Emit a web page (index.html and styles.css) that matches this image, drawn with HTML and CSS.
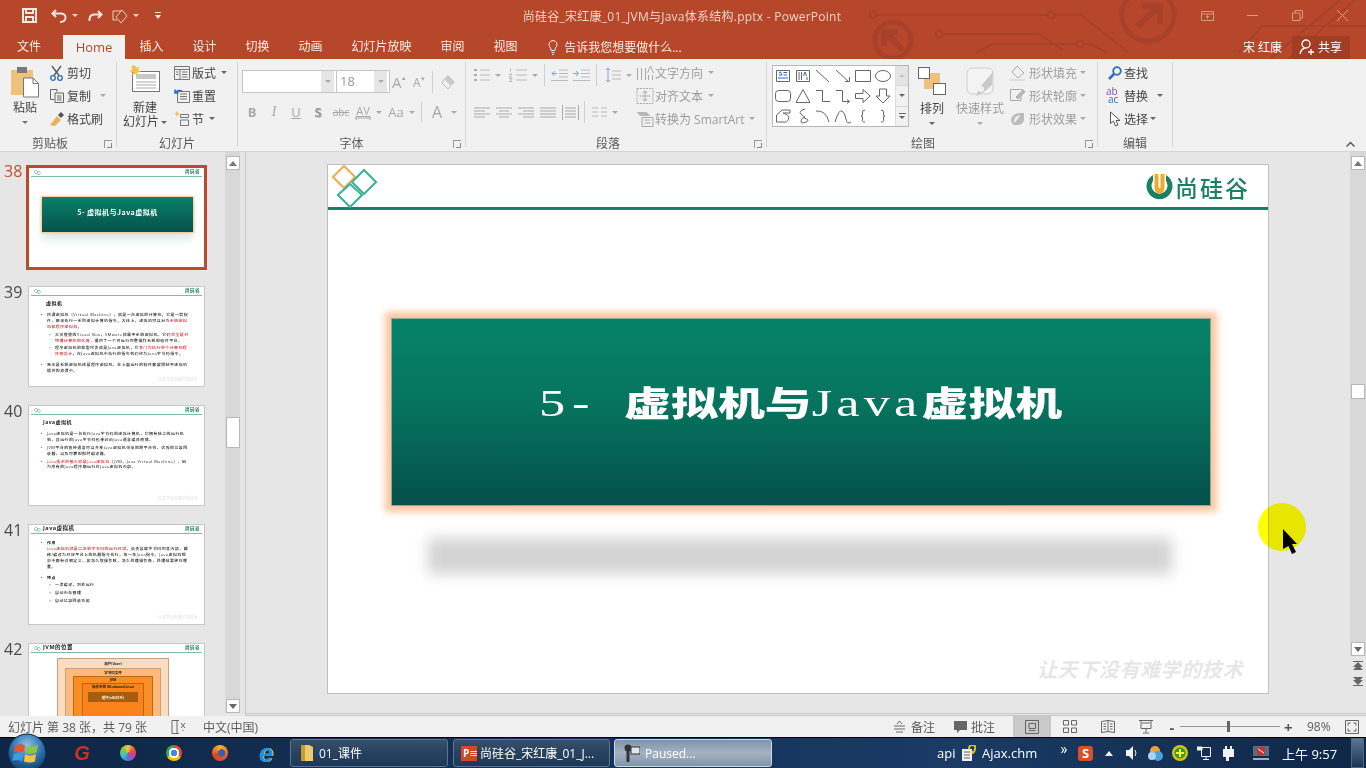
FILE: index.html
```html
<!DOCTYPE html>
<html lang="zh-CN">
<head>
<meta charset="utf-8">
<title>PowerPoint</title>
<link rel="stylesheet" href="styles.css">
</head>
<body>
<div class="app">
  <header class="chrome">
    <svg class="circuit" width="1366" height="59" viewBox="0 0 1366 59" fill="none" stroke="#a8412a" stroke-width="2">
      <circle cx="873" cy="15" r="3.5"/><path d="M877 15H1047"/><circle cx="1051" cy="15" r="3.5"/><path d="M1055 15H1081L1128 52"/>
      <circle cx="939" cy="34" r="3.5"/><path d="M943 34H1039L1063 50"/>
      <path d="M976 52L993 44H1076"/><circle cx="1080" cy="44" r="3.5"/><path d="M1084 44H1090L1106 52"/>
      <circle cx="1148" cy="15" r="26" stroke-width="5"/><path d="M1137 27L1158 7M1142 6H1160V24" stroke-width="6"/>
      <circle cx="893" cy="40" r="18" stroke-width="5"/><path d="M903 50L885 32M884 46V32H898" stroke-width="6"/>
      <path d="M1239 52L1262 26H1366M1270 59L1340 0M1288 59L1355 0"/>
    </svg>
    <div class="titlebar">
      <div class="qat">
        <svg class="q-save" width="15" height="15" viewBox="0 0 15 15" fill="none" stroke="#f5e6e0" stroke-width="2"><path d="M1 1H14V14H1ZM4 1V5H11V1M4 14V9H11V14"/></svg>
        <svg class="q-undo" width="16" height="14" viewBox="0 0 16 14" fill="none" stroke="#f5e6e0" stroke-width="2"><path d="M5 1L1.500 4.500L5 8M2 4.500H10Q15 5 14.500 9T9 13"/></svg>
        <i class="caret light q-c1"></i>
        <svg class="q-redo" width="15" height="12" viewBox="0 0 15 12" fill="none" stroke="#f5e6e0" stroke-width="2"><path d="M10 1L13.500 4.500L10 8M13 4.500H6Q1 5 1.500 11"/></svg>
        <svg class="q-touch" width="16" height="16" viewBox="0 0 16 16" fill="none" stroke="#ecd3ca"><path d="M1 3H9M1 3V12H5M10 2L15 8L9 15L4 9Z"/></svg>
        <i class="caret light q-c2"></i>
        <svg class="q-more" width="6" height="7" viewBox="0 0 6 7" fill="#f5e6e0"><path d="M0 0H6V1H0ZM0 3H6L3 7Z"/></svg>
      </div>
      <div class="doc-title">尚硅谷_宋红康_01_JVM与Java体系结构.pptx - PowerPoint</div>
      <div class="winbtns">
        <svg class="w1" width="13" height="10" viewBox="0 0 13 10" fill="none" stroke="#d99a85"><path d="M.5.5H12.500V9.500H.5ZM.5 3H12.500M6.500 8V4.500M5 6L6.500 4.500L8 6"/></svg>
        <svg class="w2" width="11" height="1" viewBox="0 0 11 1"><path d="M0 0H11V1H0Z" fill="#d99a85"/></svg>
        <svg class="w3" width="11" height="11" viewBox="0 0 11 11" fill="none" stroke="#d99a85"><path d="M.5 3H8V10.500H.5ZM3 3V.5H10.500V8H8"/></svg>
        <svg class="w4" width="11" height="11" viewBox="0 0 11 11" fill="none" stroke="#d99a85"><path d="M0 0L11 11M11 0L0 11"/></svg>
      </div>
    </div>
    <nav class="tabs">
      <span class="tab first">文件</span>
      <span class="tab home">Home</span>
      <span class="tab">插入</span>
      <span class="tab">设计</span>
      <span class="tab">切换</span>
      <span class="tab">动画</span>
      <span class="tab">幻灯片放映</span>
      <span class="tab">审阅</span>
      <span class="tab">视图</span>
      <span class="tell">
        <svg width="10" height="15" viewBox="0 0 10 15" fill="none" stroke="#fbeee9"><path d="M3 10.500Q3 8 1.500 6.500A4 4 0 1 1 8.500 6.500Q7 8 7 10.500ZM3.500 12.500H6.500M4 14.500H6"/></svg>
        告诉我您想要做什么...
      </span>
      <span class="user">宋 红康</span>
      <span class="share">
        <svg width="16" height="16" viewBox="0 0 16 16" fill="none" stroke="#fff" stroke-width="1.300"><circle cx="7" cy="5" r="4"/><path d="M1 15Q2 10 6 9M12 10V16M9 13H15"/></svg>
        共享
      </span>
    </nav>
  </header>

  <section class="ribbon">
    <div class="group g-clip">
      <div class="body">
        <div class="big paste">
          <svg width="30" height="32" viewBox="0 0 30 32"><rect x="1" y="4" width="22" height="25" fill="#eec27a"/><rect x="7" y="1" width="10" height="6" fill="#7b7b7b"/><path d="M13.500 12H23L28.500 17.500V31H13.500Z" fill="#fff" stroke="#777"/><path d="M23 12V17.500H28.500" fill="none" stroke="#777"/></svg>
          <span class="big-label">粘贴</span>
          <i class="caret"></i>
        </div>
        <div class="col col-clip">
          <div class="item"><svg class="ic" width="16" height="16" viewBox="0 0 16 16" fill="none" stroke="#555" stroke-width="1.300"><path d="M3 1L10 10.500M12 1L5 10.500"/><circle cx="4" cy="13" r="2.300" stroke="#2a6ebb"/><circle cx="11" cy="13" r="2.300" stroke="#2a6ebb"/></svg>剪切</div>
          <div class="item"><svg class="ic" width="16" height="16" viewBox="0 0 16 16" fill="none" stroke="#666"><path d="M1.500 1.500H8V4M1.500 1.500V11.500H5M6 5H14.500V14.500H6ZM8 8H12.500M8 10H12.500M8 12H12.500"/></svg>复制<i class="caret c-copy"></i></div>
          <div class="item"><svg class="ic" width="16" height="16" viewBox="0 0 16 16"><path d="M1 14L8 5L12 9L6 15Z" fill="#e8b45a"/><path d="M9 4L12 1L15 4L12 7Z" fill="#555"/></svg>格式刷</div>
        </div>
      </div>
      <div class="glabel lb-clip">剪贴板<i class="launch"></i></div>
    </div>

    <div class="group g-slides">
      <div class="body">
        <div class="big newslide">
          <svg width="32" height="28" viewBox="0 0 32 28"><rect x="3.500" y="6.500" width="27" height="20" fill="#fff" stroke="#777"/><rect x="7" y="9" width="20" height="5" fill="#c8c8c8"/><path d="M7 17H27M7 20H27M7 23H27" stroke="#aaa"/><path d="M6 0L7.500 3L11 1.500L9 5L12 7L8.500 7.500L8 11L6 8.500L3 10.500L4 7L0 6L3.500 4.500L2 1.500Z" fill="#f0c04a"/></svg>
          <span class="big-label nl1">新建</span>
          <span class="big-label nl2">幻灯片<i class="caret"></i></span>
        </div>
        <div class="col col-slides">
          <div class="item"><svg class="ic" width="16" height="14" viewBox="0 0 16 14" fill="none" stroke="#777"><path d="M.5.5H15.500V13.500H.5ZM.5 3.500H15.500M6 3.500V13.500M8 6H13.500M8 8.500H13.500M8 11H13.500M2 6H4.500M2 8.500H4.500"/></svg>版式<i class="caret"></i></div>
          <div class="item"><svg class="ic" width="16" height="15" viewBox="0 0 16 15" fill="none" stroke="#777"><path d="M3.500 3.500H15.500V14.500H3.500ZM6 6H13M6 8.500H13M6 11H13"/><path d="M8 3A5 4 0 0 0 1 5M1 1.500V5H4.500" stroke="#2a6ebb" stroke-width="1.500"/></svg>重置</div>
          <div class="item"><svg class="ic" width="16" height="15" viewBox="0 0 16 15" fill="none" stroke="#777"><path d="M6.500 3.500H14.500V6.500H6.500ZM6.500 9H14.500V14.500H6.500Z"/><path d="M3 0L4 2L6 2.500L4 3.500L3 6L2 3.500L0 2.500L2 2Z" fill="#f0c04a" stroke="none"/></svg>节<i class="caret"></i></div>
        </div>
      </div>
      <div class="glabel">幻灯片</div>
    </div>

    <div class="group g-font dim">
      <div class="body stack">
        <div class="font-row1">
          <div class="combo c-name"><span class="combo-btn"><i class="caret"></i></span></div>
          <div class="combo c-size"><span class="combo-text">18</span><span class="combo-btn"><i class="caret"></i></span></div>
          <span class="fbtn f-grow">A<sup>▴</sup></span>
          <span class="fbtn f-shrink">A<sup>▾</sup></span>
          <i class="vsep vs-a"></i>
          <svg class="f-clear" width="16" height="16" viewBox="0 0 16 16"><path d="M7 1L14 8L10 12L3 5Z" fill="#c9c9c9"/><path d="M3 5L1 9L7 15L10 12" fill="none" stroke="#bbb"/></svg>
        </div>
        <div class="font-row2">
          <b class="cell">B</b><em class="cell serif">I</em><u class="cell">U</u><b class="cell shadow">S</b>
          <span class="cell abc">abc</span>
          <span class="cell av"><span class="av-t">AV</span><svg width="16" height="4" viewBox="0 0 16 4" fill="none" stroke="#aaa"><path d="M0 2H16M2 0L0 2L2 4M14 0L16 2L14 4"/></svg></span>
          <i class="caret c-av"></i>
          <span class="cell aa">Aa</span><i class="caret c-aa"></i>
          <i class="vsep vs-b"></i>
          <span class="cell bigA">A</span><i class="caret"></i>
        </div>
      </div>
      <div class="glabel">字体<i class="launch"></i></div>
    </div>

    <div class="group g-para dim">
      <div class="body">
        <div class="stack para-left">
          <div class="para-row1">
            <svg class="p-list" width="16" height="14" viewBox="0 0 16 14" stroke="#bbb"><path d="M6 2H16M6 7H16M6 12H16"/><path d="M0 1H3V3H0ZM0 6H3V8H0ZM0 11H3V13H0Z" fill="#aaa" stroke="none"/></svg><i class="caret"></i>
            <svg class="p-num" width="18" height="14" viewBox="0 0 18 14" fill="none" stroke="#bbb"><path d="M7 2H18M7 7H18M7 12H18M1.500 .5V3.500M0 6H3L0 9H3M0 10.500H3L1.500 12L3 13.500H0"/></svg><i class="caret"></i>
            <i class="vsep vs-c"></i>
            <svg class="p-ind" width="17" height="12" viewBox="0 0 17 12" fill="none" stroke="#bbb"><path d="M8 1H17M8 4.500H17M8 8H17M0 11.500H17"/><path d="M6 4.500H1M3.500 2L1 4.500L3.500 7" stroke="#7aa5d8"/></svg>
            <svg class="p-ind2" width="17" height="12" viewBox="0 0 17 12" fill="none" stroke="#bbb"><path d="M8 1H17M8 4.500H17M8 8H17M0 11.500H17"/><path d="M0 4.500H5M3 2L5.500 4.500L3 7" stroke="#7aa5d8"/></svg>
            <i class="vsep vs-d"></i>
            <svg class="p-ls" width="16" height="16" viewBox="0 0 16 16" fill="none" stroke="#bbb"><path d="M7 4H16M7 8H16M7 12H16"/><path d="M3 1V15M1 3L3 1L5 3M1 13L3 15L5 13" stroke="#7aa5d8"/></svg><i class="caret"></i>
          </div>
          <div class="para-row2">
            <svg class="p-a" width="16" height="11" viewBox="0 0 16 11" stroke="#aaa"><path d="M0 1H16M0 4H11M0 7H16M0 10H11"/></svg>
            <svg class="p-a" width="16" height="11" viewBox="0 0 16 11" stroke="#aaa"><path d="M0 1H16M3 4H13M0 7H16M3 10H13"/></svg>
            <svg class="p-a" width="16" height="11" viewBox="0 0 16 11" stroke="#aaa"><path d="M0 1H16M5 4H16M0 7H16M5 10H16"/></svg>
            <svg class="p-a" width="16" height="11" viewBox="0 0 16 11" stroke="#aaa"><path d="M0 1H16M0 4H16M0 7H16M0 10H16"/></svg>
            <svg class="p-a" width="17" height="15" viewBox="0 0 17 15" fill="none" stroke="#aaa"><path d="M.5 0V15M16.500 0V15M3 3H14M3 6H14M3 9H14M3 12H14"/></svg>
            <i class="vsep vs-e"></i>
            <svg class="p-col" width="15" height="10" viewBox="0 0 15 10" stroke="#bbb"><path d="M0 1H6M9 1H15M0 5H6M9 5H15M0 9H6M9 9H15"/></svg><i class="caret"></i>
          </div>
        </div>
        <div class="col col-para">
          <div class="item"><svg class="ic" width="17" height="16" viewBox="0 0 17 16" fill="none" stroke="#aaa"><path d="M1 3V15M5 3V15M9 3V15M12 10V15M16 10V15M11 8L14 1L17 8"/></svg>文字方向<i class="caret"></i></div>
          <div class="item"><svg class="ic" width="17" height="16" viewBox="0 0 17 16" fill="none" stroke="#aaa" stroke-dasharray="2 1"><path d="M.5.5H16.500V15.500H.5Z"/><path d="M8.500 3V13M6 5L8.500 3L11 5M6 11L8.500 13L11 11M3 8H14" stroke-dasharray="none"/></svg>对齐文本<i class="caret"></i></div>
          <div class="item"><svg class="ic" width="17" height="16" viewBox="0 0 17 16" fill="none" stroke="#aaa"><path d="M0 1H10L14 5H4Z" fill="#b8b8b8" stroke="none"/><path d="M5.500 6.500H16.500V15.500H5.500ZM8 9H14M8 12H14"/></svg>转换为 SmartArt<i class="caret"></i></div>
        </div>
      </div>
      <div class="glabel lb-para">段落<i class="launch"></i></div>
    </div>

    <div class="group g-draw">
      <div class="body">
        <div class="gallery">
          <div class="shapes">
            <svg width="20" height="20" viewBox="0 0 20 20" fill="none" stroke="#666"><path d="M3.500 4.500H16.500V15.500H3.500Z"/><path d="M6 9H9M6 7L7.500 6L9 9M10.500 6.500H14M10.500 9H14M5 12H15" stroke="#2a6ebb"/></svg>
            <svg width="20" height="20" viewBox="0 0 20 20" fill="none" stroke="#666"><path d="M3.500 4.500H16.500V15.500H3.500ZM6 6V14M8.500 6V14M14 11V14"/><path d="M10.500 10L12 6L13.500 10" stroke="#2a6ebb"/></svg>
            <svg width="20" height="20" viewBox="0 0 20 20" stroke="#666"><path d="M3 4L16 16"/></svg>
            <svg width="20" height="20" viewBox="0 0 20 20" fill="none" stroke="#666"><path d="M3 4L16 16M12 15.500H16.500V11"/></svg>
            <svg width="20" height="20" viewBox="0 0 20 20" fill="none" stroke="#666"><path d="M2.500 4.500H17.500V15.500H2.500Z"/></svg>
            <svg width="20" height="20" viewBox="0 0 20 20" fill="none" stroke="#666"><ellipse cx="10" cy="10" rx="7.500" ry="5.500"/></svg>
            <svg width="20" height="20" viewBox="0 0 20 20" fill="none" stroke="#666"><rect x="2.500" y="4.500" width="15" height="11" rx="3"/></svg>
            <svg width="20" height="20" viewBox="0 0 20 20" fill="none" stroke="#666"><path d="M10 3.500L17 16.500H3Z"/></svg>
            <svg width="20" height="20" viewBox="0 0 20 20" fill="none" stroke="#666"><path d="M3 4.500H9.500V15.500H17"/></svg>
            <svg width="20" height="20" viewBox="0 0 20 20" fill="none" stroke="#666"><path d="M3 4.500H9.500V15.500H16M14 13.500L16.500 15.500L14 17.500"/></svg>
            <svg width="20" height="20" viewBox="0 0 20 20" fill="none" stroke="#666"><path d="M2.500 7.500H10V3.500L17 10L10 16.500V12.500H2.500Z"/></svg>
            <svg width="20" height="20" viewBox="0 0 20 20" fill="none" stroke="#666"><path d="M6.500 3H13.500V10H17L10 17L3 10H6.500Z"/></svg>
            <svg width="20" height="20" viewBox="0 0 20 20" fill="none" stroke="#666"><path d="M9 4H17V7H10Q17 9 15.500 13T10 16H3.500V9Z"/></svg>
            <svg width="20" height="20" viewBox="0 0 20 20" fill="none" stroke="#666"><path d="M12 3Q5 5 8 8T12 11Q8 12 8 15T13 16T11 12"/></svg>
            <svg width="20" height="20" viewBox="0 0 20 20" fill="none" stroke="#666"><path d="M3 5Q13 4 16 16"/></svg>
            <svg width="20" height="20" viewBox="0 0 20 20" fill="none" stroke="#666"><path d="M2 16Q6 3 9 5T13 13T18 16"/></svg>
            <svg width="20" height="20" viewBox="0 0 20 20" fill="none" stroke="#666"><path d="M12 4Q9 4 9.500 7T8 10Q10.500 10 9.500 13T12 16"/></svg>
            <svg width="20" height="20" viewBox="0 0 20 20" fill="none" stroke="#666"><path d="M8 4Q11 4 10.500 7T12 10Q9.500 10 10.500 13T8 16"/></svg>
          </div>
          <div class="gal-scroll">
            <span class="gs dis"><i class="up"></i></span>
            <span class="gs"><i class="caret dark"></i></span>
            <span class="gs"><i class="more"></i><i class="caret dark"></i></span>
          </div>
        </div>
        <div class="big arrange">
          <svg width="28" height="28" viewBox="0 0 28 28"><rect x="6" y="6" width="16" height="16" fill="#eec27a"/><rect x=".5" y=".5" width="11" height="11" fill="#fff" stroke="#666"/><rect x="15.500" y="16.500" width="12" height="11" fill="#fff" stroke="#666"/></svg>
          <span class="big-label">排列</span>
          <i class="caret dark"></i>
        </div>
        <div class="big quick dim">
          <svg width="28" height="30" viewBox="0 0 28 30"><rect x="1" y="1" width="26" height="26" rx="5" fill="#f3f3f3" stroke="#d0d0d0"/><path d="M10 29L14 20L27 5L26 18L18 25Z" fill="#c9c9c9"/><circle cx="15" cy="22" r="3" fill="#f3f3f3"/></svg>
          <span class="big-label">快速样式</span>
          <i class="caret"></i>
        </div>
        <div class="col col-draw dim">
          <div class="item"><svg class="ic" width="16" height="16" viewBox="0 0 16 16" fill="none" stroke="#aaa"><path d="M7 1L14 8L8 13L2 7Z"/><path d="M0 14H15V16H0Z" fill="#ddd" stroke="none"/></svg>形状填充<i class="caret"></i></div>
          <div class="item"><svg class="ic" width="16" height="16" viewBox="0 0 16 16" fill="none" stroke="#aaa"><path d="M13 1.500H.5V12.500H11V8"/><path d="M6 9L13 2L15 4L8 11Z" fill="#bbb"/></svg>形状轮廓<i class="caret"></i></div>
          <div class="item"><svg class="ic" width="16" height="16" viewBox="0 0 16 16"><path d="M1 8Q3 2 10 2H14V9Q13 14 7 14H4Q1 12 1 8Z" fill="#bbb"/><path d="M4 9Q5 5 10 4Q9 8 4 12Z" fill="#eee"/></svg>形状效果<i class="caret"></i></div>
        </div>
      </div>
      <div class="glabel lb-draw">绘图<i class="launch"></i></div>
    </div>

    <div class="group g-edit">
      <div class="body">
        <div class="col col-edit">
          <div class="item"><svg class="ic" width="14" height="14" viewBox="0 0 14 14" fill="none" stroke="#2a6ebb" stroke-width="1.800"><circle cx="9" cy="5" r="3.800"/><path d="M6 8L1 13" stroke-width="2.500"/></svg>查找</div>
          <div class="item"><span class="ic abac"><span class="ab">ab</span><span class="ac">ac</span></span>替换<i class="caret dark c-rep"></i></div>
          <div class="item"><svg class="ic" width="12" height="16" viewBox="0 0 12 16" fill="#fff" stroke="#555"><path d="M1.500 1V12.500L4.500 10L6.500 15L9 14L7 9.500H11Z"/></svg>选择<i class="caret dark"></i></div>
        </div>
      </div>
      <div class="glabel">编辑</div>
    </div>
    <svg class="collapse" width="9" height="6" viewBox="0 0 9 6" fill="none" stroke="#555" stroke-width="1.500"><path d="M.5 5.500L4.500 1.500L8.500 5.500"/></svg>
  </section>

  <main class="main">
    <aside class="pane">
      <div class="thumbs">
        <div class="trow selected"><span class="num">38</span>
          <div class="thumb">
            <div class="t-head"><svg width="8" height="7" viewBox="0 0 8 7" fill="none" stroke="#4fb59d" stroke-width=".6"><path d="M1 3L3 1L5 3L3 5ZM4 4L6 2L7.500 4L6 6Z"/></svg><span class="t-logo">尚硅谷</span></div>
            <div class="t-box">5- 虚拟机与Java虚拟机</div>
          </div>
        </div>
        <div class="trow"><span class="num">39</span>
          <div class="thumb">
            <div class="t-head"><svg width="8" height="7" viewBox="0 0 8 7" fill="none" stroke="#4fb59d" stroke-width=".6"><path d="M1 3L3 1L5 3L3 5ZM4 4L6 2L7.500 4L6 6Z"/></svg><span class="t-logo">尚硅谷</span></div>
            <div class="t-title t39">虚拟机</div>
            <ul class="t-list">
              <li>所谓虚拟机（Virtual Machine），就是一台虚拟的计算机。它是一款软件，用来执行一系列虚拟计算机指令。大体上，虚拟机可以分为<span class="red">系统虚拟机和程序虚拟机</span>。</li>
              <li class="sub">大名鼎鼎的Visual Box，VMware就属于系统虚拟机，它们<span class="red">完全是对物理计算机的仿真</span>，提供了一个可运行完整操作系统的软件平台。</li>
              <li class="sub">程序虚拟机的典型代表就是Java虚拟机，它<span class="red">专门为执行单个计算机程序而设计</span>，在Java虚拟机中执行的指令我们称为Java字节码指令。</li>
              <li class="gap">无论是系统虚拟机还是程序虚拟机，在上面运行的软件都被限制于虚拟机提供的资源中。</li>
            </ul>
            <div class="t-foot">让天下没有难学的技术</div>
          </div>
        </div>
        <div class="trow"><span class="num">40</span>
          <div class="thumb">
            <div class="t-head"><svg width="8" height="7" viewBox="0 0 8 7" fill="none" stroke="#4fb59d" stroke-width=".6"><path d="M1 3L3 1L5 3L3 5ZM4 4L6 2L7.500 4L6 6Z"/></svg><span class="t-logo">尚硅谷</span></div>
            <div class="t-title t40">Java虚拟机</div>
            <ul class="t-list">
              <li>Java虚拟机是一台执行Java字节码的虚拟计算机，它拥有独立的运行机制，其运行的Java字节码也未必由Java语言编译而成。</li>
              <li>JVM平台的各种语言可以共享Java虚拟机带来的跨平台性、优秀的垃圾回收器，以及可靠的即时编译器。</li>
              <li><span class="red">Java技术的核心就是Java虚拟机</span>（JVM，Java Virtual Machine），因为所有的Java程序都运行在Java虚拟机内部。</li>
            </ul>
            <div class="t-foot">让天下没有难学的技术</div>
          </div>
        </div>
        <div class="trow"><span class="num">41</span>
          <div class="thumb">
            <div class="t-head"><svg width="8" height="7" viewBox="0 0 8 7" fill="none" stroke="#4fb59d" stroke-width=".6"><path d="M1 3L3 1L5 3L3 5ZM4 4L6 2L7.500 4L6 6Z"/></svg><span class="t-inline">Java虚拟机</span><span class="t-logo">尚硅谷</span></div>
            <ul class="t-list t41">
              <li><b>作用</b><br><span class="red">Java虚拟机就是二进制字节码的运行环境</span>，负责装载字节码到其内部，解释/编译为对应平台上的机器指令执行。每一条Java指令，Java虚拟机规范中都有详细定义，如怎么取操作数，怎么处理操作数，处理结果放在哪里。</li>
              <li class="gap"><b>特点</b></li>
              <li class="sub">一次编译，到处运行</li>
              <li class="sub">自动内存管理</li>
              <li class="sub">自动垃圾回收功能</li>
            </ul>
            <div class="t-foot">让天下没有难学的技术</div>
          </div>
        </div>
        <div class="trow"><span class="num">42</span>
          <div class="thumb">
            <div class="t-head"><svg width="8" height="7" viewBox="0 0 8 7" fill="none" stroke="#4fb59d" stroke-width=".6"><path d="M1 3L3 1L5 3L3 5ZM4 4L6 2L7.500 4L6 6Z"/></svg><span class="t-inline">JVM的位置</span><span class="t-logo">尚硅谷</span></div>
            <div class="layers l1">用户(User)
              <div class="layers l2">字节码文件
                <div class="layers l3">JVM
                  <div class="layers l4">操作系统 Windows/Linux
                    <div class="layers l5">硬件(x86体系)</div>
                  </div>
                </div>
              </div>
            </div>
          </div>
        </div>
      </div>
      <div class="vscroll thin">
        <span class="sbtn"><i class="up"></i></span>
        <span class="sthumb sth-left"></span>
        <span class="sbtn bottom"><i class="caret dark"></i></span>
      </div>
    </aside>

    <section class="edit">
      <div class="edit-top">
        <div class="slide-wrap">
          <article class="slide">
            <div class="s-head">
              <svg width="50" height="44" viewBox="0 0 50 44" fill="none" stroke-width="2.200"><path d="M16 1L27 12L16 23L5 12Z" stroke="#eab057"/><path d="M36 5L48 17L36 29L24 17Z" stroke="#3fb39a"/><path d="M22 19L34 30L22 42L10 30Z" stroke="#3fb39a"/></svg>
              <div class="s-logo">
                <svg width="27" height="28" viewBox="0 0 27 28"><path d="M7 2A13 13 0 1 0 20 2V8A8 8 0 1 1 7 8Z" fill="#1b7f62"/><path d="M8.500 1H18.500V15A5 5.500 0 0 1 8.500 15Z" fill="#eeaa2c"/><path d="M12.500 1H14.500V15H12.500Z" fill="#fff"/></svg>
                <span>尚硅谷</span>
              </div>
            </div>
            <div class="s-box"><h1 class="s-title"><span class="lat sp">5-</span>虚拟机与<span class="lat">Java</span>虚拟机</h1></div>
            <div class="s-sub"></div>
            <div class="s-water">让天下没有难学的技术</div>
          </article>
        </div>
        <div class="vscroll wide">
          <span class="sbtn"><i class="up"></i></span>
          <span class="sthumb sth-right"></span>
          <span class="sbtn bottom2"><i class="caret dark"></i></span>
          <div class="pager">
            <svg width="10" height="10" viewBox="0 0 10 10" fill="#666"><path d="M0 1H10V2H0ZM5 2L10 7H0ZM5 5L10 10H0Z"/></svg>
            <svg width="10" height="10" viewBox="0 0 10 10" fill="#666"><path d="M0 0L10 0L5 5ZM0 3L10 3L5 8ZM0 8H10V9H0Z"/></svg>
          </div>
        </div>
      </div>
      <div class="hlines"></div>
    </section>
  </main>

  <footer class="status">
    <span class="st-count">幻灯片 第 38 张，共 79 张</span>
    <svg class="st-spell" width="15" height="14" viewBox="0 0 15 14" fill="none" stroke="#666"><path d="M6 .5H1V13.500H6M8 .5H6V13.500H8M10 3L14 8M14 3L10 8M12 10V11"/></svg>
    <span class="st-lang">中文(中国)</span>
    <div class="st-right">
      <span class="st-btn"><svg width="11" height="12" viewBox="0 0 11 12" fill="none" stroke="#666"><path d="M0 5H11M0 8H11M2 11H9M5.500 0L3 3M5.500 0L8 3"/></svg>备注</span>
      <span class="st-btn st-b2"><svg width="13" height="12" viewBox="0 0 13 12"><path d="M0 0H13V9H6L3 12V9H0Z" fill="#666"/></svg>批注</span>
      <span class="view on"><svg width="14" height="14" viewBox="0 0 14 14" fill="none" stroke="#666"><path d="M.5.5H13.500V13.500H.5ZM4 3.500H10.500V8.500H4ZM4 10.500H10.500"/></svg></span>
      <span class="view"><svg width="14" height="13" viewBox="0 0 14 13" fill="none" stroke="#666"><path d="M.5.5H5.500V5H.5ZM8.500.5H13.500V5H8.500ZM.5 8H5.500V12.500H.5ZM8.500 8H13.500V12.500H8.500Z"/></svg></span>
      <span class="view"><svg width="14" height="13" viewBox="0 0 14 13" fill="none" stroke="#666"><path d="M.5 1.500L7 .5L13.500 1.500V12.500L7 11.500L.5 12.500ZM7 .5V11.500M2.500 4H5M2.500 6.500H5M2.500 9H5M9 4H11.500M9 6.500H11.500M9 9H11.500"/></svg></span>
      <span class="view"><svg width="14" height="14" viewBox="0 0 14 14" fill="none" stroke="#666"><path d="M0 .5H14M2 .5V8.500H12V.5M7 8.500V12M4 13H10M3 3H11"/></svg></span>
      <span class="zbtn zm">-</span>
      <span class="slider"><i></i></span>
      <span class="zbtn zp">+</span>
      <span class="zoom">98%</span>
      <svg class="fit" width="14" height="14" viewBox="0 0 14 14" fill="none" stroke="#666"><path d="M.5.5H13.500V13.500H.5ZM3 5.500V3H5.500M8.500 3H11V5.500M11 8.500V11H8.500M5.500 11H3V8.500"/></svg>
    </div>
  </footer>

  <footer class="taskbar">
    <div class="launchers">
      <span class="lc"><b class="g-logo">G</b></span>
      <span class="lc"><i class="ball b-color"></i></span>
      <span class="lc"><i class="ball b-chrome"></i></span>
      <span class="lc"><i class="ball b-fox"></i></span>
      <span class="lc"><b class="ie">e</b></span>
    </div>
    <div class="tb-btn b-first"><svg width="14" height="18" viewBox="0 0 14 18"><path d="M1 1H9L13 3V17H1Z" fill="#eccb6b"/><path d="M1 1H5V17H1Z" fill="#c59b34"/></svg>01_课件</div>
    <div class="tb-btn b-ppt"><span class="ppt-ic">P<i>≡</i></span>尚硅谷_宋红康_01_J...</div>
    <div class="tb-btn active"><svg width="16" height="18" viewBox="0 0 16 18"><circle cx="4" cy="4" r="3.500" fill="#333"/><rect x="2.500" y="6" width="3" height="12" fill="#333"/><rect x="7" y="3" width="9" height="7" fill="#dfe5ec" stroke="#333"/></svg>Paused...</div>
    <div class="tray">
      <span class="tt">api</span>
      <svg class="doc-ic" width="14" height="16" viewBox="0 0 14 16"><path d="M0 4H10V16H0Z" fill="#f0f0f0"/><path d="M2 7H8M2 10H8M2 13H8" stroke="#666"/><path d="M7 4Q7 0 10.500 0T13 4T10.500 7V9" fill="none" stroke="#e8c020" stroke-width="2"/></svg>
      <span class="tt ajax">Ajax.chm</span>
      <span class="chev">»</span>
      <span class="sogou">S</span>
      <i class="tri"></i>
      <svg width="12" height="14" viewBox="0 0 12 14"><path d="M0 4H3L7 0V14L3 10H0Z" fill="#f2f2f2"/><path d="M9 4Q11 7 9 10" stroke="#f2f2f2" fill="none"/></svg>
      <svg width="17" height="15" viewBox="0 0 17 15"><circle cx="8" cy="5" r="5" fill="#e8a53d"/><circle cx="11" cy="10" r="5" fill="#4d9fe0"/><circle cx="5" cy="10" r="4" fill="#a9d3f0"/></svg>
      <svg width="16" height="16" viewBox="0 0 16 16"><circle cx="8" cy="8" r="8" fill="#d1c31a"/><circle cx="8" cy="8" r="5.500" fill="#3d9a1e"/><path d="M7 4H9V7H12V9H9V12H7V9H4V7H7Z" fill="#ffe94a"/></svg>
      <svg width="14" height="14" viewBox="0 0 14 14" fill="none" stroke="#f2f2f2"><path d="M4.500 1.500H13.500V10.500H4.500ZM9 10.500V13M6 13.500H12"/><path d="M0 1H5V4H0Z" fill="#f2f2f2"/></svg>
      <svg width="13" height="15" viewBox="0 0 13 15"><path d="M2 3H13V11H8V15H5V11H2Z" fill="#f2f2f2"/><path d="M5 0V3M10 0V3" stroke="#f2f2f2" stroke-width="2"/></svg>
      <svg width="16" height="14" viewBox="0 0 16 14"><rect width="16" height="10" fill="#5a6c80"/><circle cx="8" cy="5" r="4" fill="#d82828"/><path d="M5 3L11 7" stroke="#fff"/><path d="M0 12H16V14H0Z" fill="#aab"/></svg>
      <span class="clock">上午 9:57</span>
      <i class="desktop"></i>
    </div>
  </footer>

  <svg class="orb" width="40" height="40" viewBox="0 0 40 40">
    <defs><radialGradient id="orbg" cx="50%" cy="30%" r="70%"><stop offset="0" stop-color="#8fc4ea"/><stop offset=".6" stop-color="#2a6da8"/><stop offset="1" stop-color="#123a66"/></radialGradient></defs>
    <circle cx="20" cy="20" r="19" fill="url(#orbg)" stroke="#0d2440"/>
    <path d="M8 13Q13 10 18 12.500L16.500 19.500Q12 17.500 7 19.500Z" fill="#e4572e"/>
    <path d="M20 13Q25 15 31 12L29.500 19.500Q24 22 18.500 20Z" fill="#8cc63f"/>
    <path d="M6.500 21Q12 19 16 21L15 28Q10 26 5 28Z" fill="#3d9be0"/>
    <path d="M18 21.500Q24 24 29 21L28 28.500Q23 30.500 17 28.500Z" fill="#f6c445"/>
  </svg>
  <i class="pointer-halo"></i>
  <svg class="pointer" width="15" height="25" viewBox="0 0 15 25"><path d="M0 0L14 15H9L13 23L9 25L5.500 17L0 20Z" fill="#000"/></svg>
</div>
</body>
</html>
```

FILE: styles.css
```css
* { box-sizing: border-box; }
html, body { margin: 0; padding: 0; }
body { width: 1366px; height: 768px; overflow: hidden; background: #e6e6e6; font-family: "Open Sans", "Noto Sans CJK SC", sans-serif; font-size: 12px; color: #444; }
.app { position: relative; width: 1366px; height: 768px; overflow: hidden; display: flex; flex-direction: column; }
i { display: block; font-style: normal; }

/* chrome */
.chrome { position: relative; height: 59px; background: #b7472a; flex: none; }
.circuit { position: absolute; left: 0; top: 0; }
.titlebar { position: relative; display: grid; grid-template-columns: 1fr auto 1fr; height: 35px; align-items: center; padding-bottom: 4px; }
.qat { display: flex; align-items: center; padding-left: 22px; }
.q-undo { margin-left: 14px; }
.q-c1 { margin-left: 4px; }
.q-redo { margin-left: 10px; }
.q-touch { margin-left: 9px; }
.q-c2 { margin-left: 5px; }
.q-more { margin-left: 16px; }
.doc-title { color: #edd4cb; font-size: 12px; letter-spacing: .25px; margin-right: 2px; }
.winbtns { display: flex; align-items: center; justify-content: flex-end; }
.winbtns .w1 { margin-right: 33px; }
.winbtns .w2 { margin-right: 34px; }
.winbtns .w3 { margin-right: 34px; }
.winbtns .w4 { margin-right: 18px; }
.tabs { position: relative; display: flex; height: 24px; align-items: center; color: #fbeee9; }
.tab { padding: 0 14.500px; line-height: 24px; height: 24px; }
.tab.first { padding: 0 14.500px 0 17px; margin-right: 7.500px; }
.tab.home { width: 62px; background: #f1f1f1; color: #b7472a; text-align: center; font-size: 13px; padding: 0; }
.tell { display: flex; align-items: center; gap: 6px; margin-left: 16px; }
.user { margin-left: auto; color: #fff; }
.share { display: flex; align-items: center; gap: 3px; width: 58px; height: 23px; margin: 0 16px 0 10px; padding-left: 7px; background: #a23d23; color: #fff; }

/* ribbon */
.ribbon { position: relative; display: flex; height: 93px; flex: none; background: #f1f1f1; border-bottom: 1px solid #d4d4d4; padding-top: 3px; }
.group { height: 85px; border-right: 1px solid #d6d6d6; flex: none; }
.body { display: flex; height: 74px; }
.body.stack { display: flow-root; }
.glabel { position: relative; top: 1px; height: 11px; line-height: 14px; text-align: center; color: #5a5a5a; }
.lb-clip { padding-right: 16px; }
.lb-para { padding-right: 16px; }
.lb-draw { padding-right: 18px; }
.launch { position: absolute; right: 4px; top: 3px; width: 8px; height: 8px; border-left: 1px solid #999; border-top: 1px solid #999; }
.launch::after { content: ""; position: absolute; right: 0; bottom: 0; width: 4px; height: 4px; border-right: 1px solid #888; border-bottom: 1px solid #888; }
.g-clip { width: 117px; }
.g-slides { width: 121px; }
.g-font { width: 228px; }
.g-para { width: 301px; }
.g-draw { width: 331px; }
.g-edit { width: 75px; }
.dim { color: #9d9d9d; }
.dim .glabel { color: #5a5a5a; }
.caret { width: 0; height: 0; border-left: 3px solid transparent; border-right: 3px solid transparent; border-top: 3px solid #aaa; margin-left: 5px; flex: none; }
.caret.dark { border-top-color: #666; margin: 0; }
.caret.light { border-top-color: #f0d8cf; }
.big { display: flex; flex-direction: column; align-items: center; color: #444; flex: none; }
.big .caret { margin: 0; }
.big-label { line-height: 16px; display: flex; align-items: center; }
.paste { width: 44px; margin-left: 3px; padding-top: 4px; }
.paste .big-label { margin-top: 2px; }
.paste .caret { margin-top: 5px; border-top-color: #777; }
.col { display: flex; flex-direction: column; flex: none; margin-top: -1px; }
.item { display: flex; align-items: center; height: 23px; white-space: nowrap; }
.ic { width: 18px; margin-right: 0; flex: none; }
.col-clip { margin-left: 1px; }
.col-clip .ic { margin-right: 1px; }
.c-copy { margin-left: 9px; }
.newslide { width: 50px; margin-left: 3px; padding-top: 3px; }
.newslide .nl1 { margin-top: 8px; line-height: 14px; }
.newslide .nl2 { line-height: 14px; }
.newslide .nl2 .caret { margin-left: 2px; border-top-color: #666; }
.col-slides { margin-left: 3px; }
.col-slides .ic { margin-right: 1px; }
.col-slides .caret { border-top-color: #666; }
.font-row1 { display: flex; align-items: center; height: 23px; margin: 8px 0 0 4px; }
.combo { display: flex; justify-content: flex-end; height: 23px; border: 1px solid #c6c6c6; background: #fff; }
.c-name { width: 95px; }
.c-size { width: 54px; margin-left: -1px; justify-content: space-between; }
.combo-text { padding-left: 3px; line-height: 21px; font-size: 13px; color: #999; }
.combo-btn { display: flex; align-items: center; justify-content: center; width: 13px; background: #e6e6e6; margin-right: 2px; }
.combo-btn .caret { margin: 0; }
.fbtn { font-size: 14px; line-height: 20px; display: flex; align-items: flex-start; width: 21px; color: #aaa; }
.fbtn sup { font-size: 7px; line-height: 10px; margin-top: 1px; }
.f-grow { margin-left: 2px; font-size: 15px; }
.f-shrink { font-size: 12px; padding-top: 2px; }
.vs-a { margin-left: -2px; }
.vsep { width: 1px; height: 22px; background: #d0d0d0; flex: none; }
.f-clear { margin-left: 8px; }
.font-row2 { display: flex; align-items: center; height: 22px; margin: 8px 0 0 3px; color: #a8a8a8; }
.cell { width: 22px; text-align: center; font-size: 13px; flex: none; }
.serif { font-family: "Liberation Serif", serif; font-size: 14px; }
.shadow { text-shadow: 1px 1px 0 #ccc; color: #999; }
.abc { font-size: 10px; text-decoration: line-through; padding-left: 2px; }
.av { display: flex; flex-direction: column; align-items: center; width: 20px; margin-left: 2px; }
.av-t { font-size: 11px; line-height: 11px; text-decoration: underline; }
.c-av { margin-left: 3px; }
.aa { width: 24px; margin-left: 2px; }
.c-aa { margin-left: 1px; }
.vs-b { margin-left: 6px; }
.bigA { font-size: 16px; width: 30px; }
.font-row2 .bigA + .caret { margin-left: -1px; }
.para-left { width: 168px; padding-left: 8px; }
.para-row1 { display: flex; align-items: center; height: 22px; margin-top: 2px; }
.p-num { margin-left: 8px; }
.para-row1 .caret { margin-left: 5px; }
.vs-c { margin-left: 6px; }
.p-ind { margin-left: 6px; }
.p-ind2 { margin-left: 5px; }
.vs-d { margin-left: 6px; }
.p-ls { margin-left: 8px; }
.para-row2 { display: flex; align-items: center; height: 22px; margin-top: 15px; }
.p-a { margin-right: 6px; }
.vs-e { margin-left: -1px; }
.p-col { margin-left: 7px; }
.para-row2 .caret { margin-left: 5px; }
.col-para .ic { width: 20px; }
.col-para { margin-left: 1px; }
.gallery { display: flex; width: 137px; height: 62px; margin: 3px 0 0 5px; border: 1px solid #b8b8b8; background: #fff; flex: none; }
.shapes { display: grid; grid-template-columns: repeat(6, 20px); grid-auto-rows: 20px; width: 123px; }
.gal-scroll { display: flex; flex-direction: column; width: 13px; background: #e9e9e9; border-left: 1px solid #ddd; }
.gs { position: relative; flex: 1; display: flex; flex-direction: column; align-items: center; justify-content: center; gap: 1px; border-bottom: 1px solid #d8d8d8; background: #f1f1f1; }
.gs.dis { background: #e4e4e4; }
.gs:last-child { border-bottom: 0; }
.gs .up, .sbtn .up { width: 0; height: 0; border-left: 4px solid transparent; border-right: 4px solid transparent; border-bottom: 5px solid #777; }
.gs.dis .up { border-bottom-color: #c4c4c4; border-left-width: 3px; border-right-width: 3px; border-bottom-width: 3px; }
.more { width: 7px; height: 1px; background: #666; margin-bottom: 1px; }
.arrange { width: 36px; margin-left: 5px; padding-top: 5px; }
.arrange .big-label { margin-top: 6px; }
.arrange .caret { margin-top: 5px; }
.quick { width: 48px; margin-left: 6px; padding-top: 5px; color: #9d9d9d; }
.quick .big-label { margin-top: 4px; }
.quick .caret { margin-top: 5px; }
.col-draw { margin-left: 5px; }
.col-draw .ic { margin-right: 2px; }
.col-draw .caret { margin-left: 3px; }
.col-edit { margin-left: 8px; }
.col-edit .ic { width: 18px; }
.abac { display: flex; flex-direction: column; font-size: 10px; line-height: 8px; height: 17px; }
.ab { color: #7a4fb0; }
.ac { color: #2a6ebb; padding-left: 2px; }
.c-rep { margin-left: 9px !important; }
.col-edit .item:last-child .caret { margin-left: 2px; }
.collapse { position: absolute; right: 11px; top: 82px; }

/* main */
.main { display: flex; height: 564px; flex: none; overflow: hidden; background: #e6e6e6; }
.pane { display: flex; width: 246px; flex: none; border-right: 1px solid #c8c8c8; }
.thumbs { width: 225px; padding-top: 13px; flex: none; overflow: hidden; }
.trow { display: flex; margin-bottom: 18px; }
.trow.selected { margin-bottom: 16px; }
.num { width: 26px; padding-left: 4px; flex: none; font-size: 16px; line-height: 14px; margin-top: -1px; color: #4a4a4a; }
.selected .num { color: #c14f32; }
.thumb { position: relative; width: 177px; height: 101px; margin-left: 2px; background: #fff; border: 1px solid #c6c6c6; overflow: hidden; font-size: 3.900px; letter-spacing: .5px; line-height: 5.900px; font-weight: 500; color: #222; flex: none; }
.selected .thumb { width: 181px; height: 105px; margin-left: 0; border: 3px solid #c0492c; }
.t-head { display: flex; align-items: center; height: 9px; margin: 0 2px; padding: 0 2px; border-bottom: 1px solid #7cbcaa; }
.t-logo { margin-left: auto; color: #1b7f62; font-size: 4.500px; font-weight: 700; }
.t-inline { font-size: 5.500px; margin-left: 2px; font-weight: 700; }
.t-box { margin: 20px 11px 0 13px; height: 35px; background: linear-gradient(#0a8169, #05514a); box-shadow: 0 0 2px 1px #f5bf85, 0 8px 8px #dfe9e9; color: #fff; font-size: 7px; font-weight: 700; text-align: center; line-height: 30px; font-family: "Noto Sans CJK SC", sans-serif; }
.t-title { font-size: 5px; font-weight: 700; }
.t39 { margin: 5px 0 0 17px; }
.t40 { margin: 5px 0 0 14px; }
.t-list { margin: 5px 14px 0 12px; padding: 0 0 0 6px; list-style: none; }
.t-list li { margin-bottom: 2px; position: relative; }
.t-list li::before { content: "•"; position: absolute; left: -6px; }
.t-list .sub { margin-left: 8px; }
.t-list .sub::before { content: ">"; }
.t-list .gap { margin-top: 5px; }
.t41 { margin-top: 6px; }
.red { color: #d8222c; }
.t-foot { position: absolute; right: 6px; bottom: 3px; font-size: 4px; letter-spacing: 0; color: #e4e4e4; }
.layers { text-align: center; border: 1px solid #c6a17e; line-height: 6px; font-size: 3.500px; letter-spacing: 0; font-weight: 700; }
.l1 { margin: 5px 0 0 28px; width: 112px; padding: 2px 7px; height: 90px; background: #fbdcc0; }
.l2 { margin: 1px 0 0; padding: 1px 7px; height: 80px; background: #fdba7c; }
.l3 { margin-top: 0; padding: 0 8px; height: 70px; background: #f98e24; border-color: #b86a1c; }
.l4 { padding: 0 5px; height: 40px; background: #f9851a; border-color: #b5651c; }
.l5 { height: 10px; margin-top: 2px; background: #a65d10; border-color: #a65d10; color: #ffe9c4; line-height: 9px; }
.vscroll { position: relative; display: flex; flex-direction: column; align-items: center; flex: none; }
.vscroll.thin { width: 15px; height: 561px; padding-top: 4px; background: #d8d8d8; }
.vscroll.wide { width: 16px; padding-top: 4px; background: linear-gradient(#d8d8d8 0, #d8d8d8 504px, #e6e6e6 504px); }
.sbtn { display: flex; align-items: center; justify-content: center; width: 14px; height: 14px; background: #fff; border: 1px solid #b8b8b8; flex: none; }
.sbtn .caret { border-left-width: 4px; border-right-width: 4px; border-top-width: 5px; }
.sthumb { width: 14px; background: #fff; border: 1px solid #b8b8b8; flex: none; }
.sth-left { height: 31px; margin-top: 247px; }
.sth-right { height: 15px; margin-top: 214px; }
.sbtn.bottom { margin-top: 251px; }
.sbtn.bottom2 { margin-top: 243px; }
.pager { display: flex; flex-direction: column; align-items: center; gap: 7px; margin-top: 4px; }
.edit { flex: 1; display: flex; flex-direction: column; min-width: 0; }
.edit-top { display: flex; height: 561px; }
.slide-wrap { flex: 1; padding: 12px 0 0 81px; }
.hlines { height: 3px; border-top: 1px solid #c8c8c8; border-bottom: 1px solid #c8c8c8; }

/* slide */
.slide { position: relative; display: flex; flex-direction: column; width: 942px; height: 530px; background: #fff; border: 1px solid #c0c0c0; }
.s-head { display: flex; justify-content: space-between; height: 45px; border-bottom: 3px solid #1a7f68; flex: none; overflow: visible; }
.s-logo { display: flex; align-items: center; gap: 2px; margin-right: 18px; height: 42px; padding-top: 2px; }
.s-logo span { font-size: 23px; line-height: 28px; font-weight: 500; letter-spacing: 2px; color: #1b7f62; font-family: "Noto Sans CJK SC", sans-serif; }
.s-box { display: flex; align-items: center; justify-content: center; width: 820px; height: 188px; margin: 108px 0 0 63px; padding-bottom: 20px; background: linear-gradient(#06836a 0, #06745f 45%, #05504a 100%); box-shadow: 0 0 7px 6px #fcc5a0; border: 1px solid #7fae95; flex: none; }
.s-title { margin: 0; color: #fff; font-family: "Noto Sans CJK SC", sans-serif; font-size: 34px; font-weight: 900; line-height: 48px; white-space: nowrap; transform: scaleX(1.38); }
.lat { font-family: "Liberation Serif", serif; font-weight: 400; font-size: 38px; letter-spacing: 3px; }
.lat.sp { margin-right: 20px; letter-spacing: 5px; }
.s-sub { width: 744px; height: 36px; margin: 32px 0 0 100px; background: #d4d4d4; filter: blur(7px); flex: none; }
.s-water { margin: 83px 0 0 709px; font-size: 20px; line-height: 24px; font-weight: 700; font-style: italic; letter-spacing: .6px; white-space: nowrap; color: #e6e6e6; font-family: "Noto Sans CJK SC", sans-serif; }

/* status */
.status { display: flex; align-items: center; height: 22px; flex: none; padding-left: 8px; background: #f1f1f1; color: #5c5c5c; border-bottom: 1px solid #000; }
.st-count { width: 163px; white-space: nowrap; }
.st-lang { margin-left: 17px; }
.st-right { display: flex; align-items: center; margin-left: auto; height: 21px; padding-right: 7px; }
.st-btn { display: flex; align-items: center; gap: 6px; }
.st-b2 { margin-left: 19px; gap: 4px; }
.view { display: flex; align-items: center; justify-content: center; width: 38px; height: 21px; }
.view.on { margin-left: 18px; background: #c9c9c9; }
.zbtn { font-size: 15px; font-weight: 700; width: 8px; line-height: 18px; text-align: center; color: #555; }
.zm { margin-left: 3px; }
.slider { position: relative; width: 100px; height: 1px; margin: 0 4px; background: #999; }
.slider i { position: absolute; left: 47px; top: -5px; width: 3px; height: 11px; background: #666; }
.zoom { margin-left: 15px; width: 38px; }
.fit { flex: none; }

/* taskbar */
.taskbar { display: flex; align-items: center; height: 30px; flex: none; background: linear-gradient(90deg, #0f2747 0, #15345c 50%, #1a3b66 70%, #0f2747 100%); color: #fff; padding-left: 59px; }
.launchers { display: grid; grid-template-columns: repeat(5, 46px); width: 231px; flex: none; }
.lc { display: flex; justify-content: center; align-items: center; height: 28px; }
.g-logo { color: #c8321e; font-size: 20px; font-style: italic; line-height: 20px; font-family: "Liberation Sans", sans-serif; }
.ball { width: 16px; height: 16px; border-radius: 50%; }
.b-color { background: conic-gradient(#f6c445, #e4572e, #c63fa8, #5b6ee0, #3dc0d0, #7ac943, #f6c445); }
.b-chrome { background: radial-gradient(#4285f4 0 3px, #fff 3.500px 5px, transparent 5.500px), conic-gradient(#ea4335 0 120deg, #fbbc05 120deg 240deg, #34a853 240deg); }
.b-fox { background: radial-gradient(circle at 60% 50%, #3b5fa8 0 3.500px, transparent 4px), conic-gradient(#f7b32b, #e4572e, #d8431f, #f7b32b); }
.ie { color: #1f8fe0; font-size: 26px; line-height: 24px; font-style: italic; font-family: "Liberation Sans", sans-serif; text-shadow: 1px 0 0 #f0c040; }
.tb-btn { display: flex; align-items: center; gap: 5px; height: 28px; padding-left: 9px; border: 1px solid #5d7390; border-radius: 3px; background: linear-gradient(#35506f 0, #29425f 45%, #1d3857 100%); font-size: 12px; white-space: nowrap; flex: none; }
.b-first { width: 158px; }
.b-ppt { width: 157px; margin-left: 5px; padding-left: 7px; gap: 3px; }
.active { width: 158px; margin-left: 4px; padding-left: 9px; background: linear-gradient(#7e92a8 0, #a5b3c2 50%, #7f95ad 100%); border-color: #cfd9e4; color: #fff; gap: 5px; }
.ppt-ic { display: flex; align-items: center; width: 16px; height: 15px; background: #d24726; font-size: 10px; font-weight: 700; padding-left: 2px; line-height: 15px; }
.ppt-ic i { font-size: 9px; }
.tray { display: grid; grid-template-columns: 25px 20px 73px 18px 25px 22px 23px 24px 25px 23px 24px 43px 69px 13px; align-items: center; justify-items: center; margin-left: 165px; height: 30px; }
.tt { justify-self: start; font-size: 13px; }
.doc-ic { justify-self: start; }
.chev { font-size: 14px; line-height: 14px; margin-bottom: 8px; }
.sogou { display: block; width: 15px; height: 15px; background: #d8502a; border-radius: 3px; text-align: center; font-weight: 700; font-size: 13px; line-height: 15px; color: #fff; }
.tri { width: 0; height: 0; border-left: 4px solid transparent; border-right: 4px solid transparent; border-bottom: 5px solid #f2f2f2; }
.clock { justify-self: start; font-size: 13px; white-space: nowrap; }
.desktop { justify-self: stretch; height: 30px; background: linear-gradient(#5a7592, #1c3557); border: 1px solid #53697f; }
.orb { position: absolute; left: 7px; top: 733px; }
.pointer-halo { position: absolute; left: 1258px; top: 503px; width: 48px; height: 48px; border-radius: 50%; background: #ffff00; mix-blend-mode: multiply; }
.pointer { position: absolute; left: 1283px; top: 529px; }
```
